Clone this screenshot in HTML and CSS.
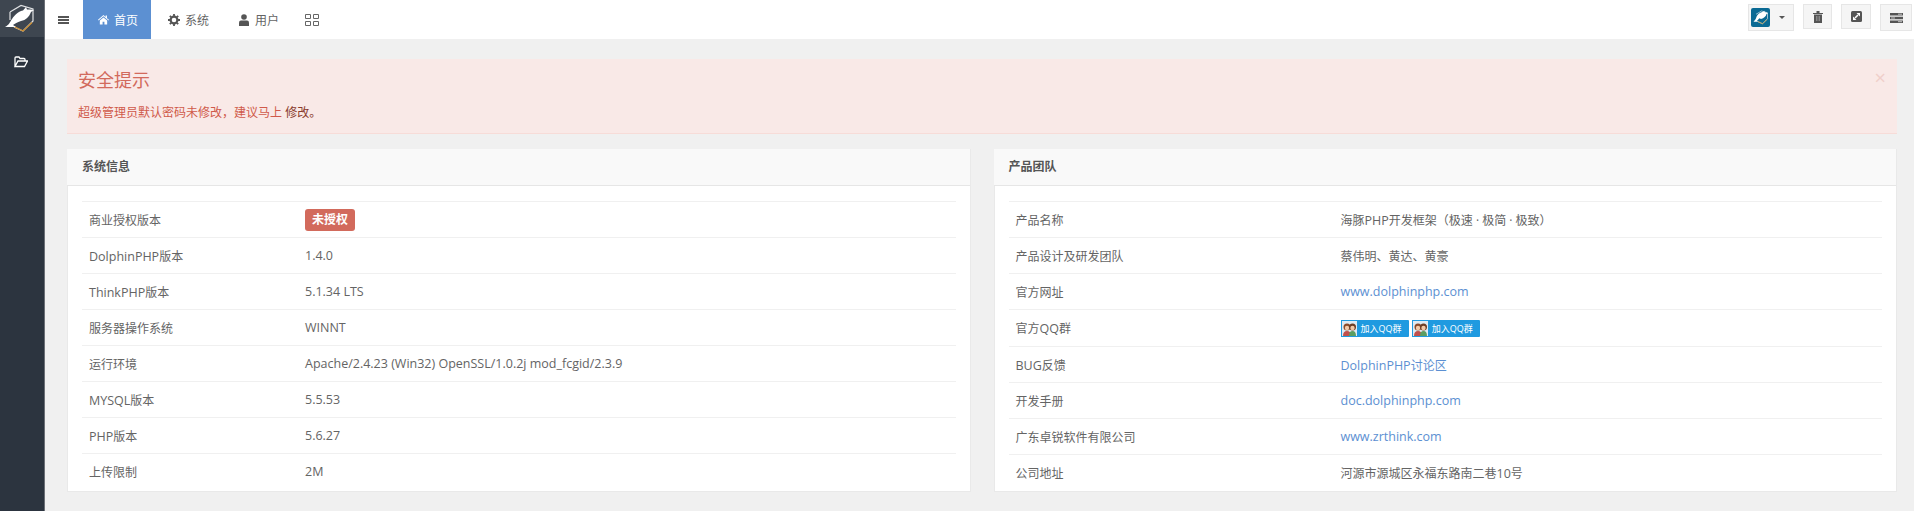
FILE: index.html
```html
<!DOCTYPE html>
<html lang="zh-CN">
<head>
<meta charset="utf-8">
<title>后台首页</title>
<link rel="stylesheet" href="styles.css">
</head>
<body>
<div class="page">
  <aside class="sidebar">
    <div class="brand">
      <svg width="44" height="37" viewBox="0 0 44 37"><path d="M10 12 21 5.500 33 9v12L23 31l-9-4M10 12v8" fill="none" stroke="#dfe1e3" stroke-width="1.200"/><path d="M14 26.500 23 31l9-8.500" fill="none" stroke="#c98a2c" stroke-width="1.200"/><path d="M5 27C9 25 10 22 12 19 15 14 20 11 23 10.500L26 7l1 2.500C29 9.500 31.500 9.500 34 10l-3 2C29 17 26 20 21 21 17 22 15 24 13 25l3 2z" fill="#fff"/></svg>
    </div>
    <div class="side-item">
      <svg width="14" height="12" viewBox="0 0 14 12"><path d="M1 10.500V2q0-1 1-1h3l1 1.500h4q1 0 1 1V5M1 10.500h9.500L13.500 5H4z" fill="none" stroke="#fff" stroke-width="1.300"/></svg>
    </div>
  </aside>
  <div class="main">
    <header class="topbar">
      <div class="top-left">
        <span class="burger"><i></i><i></i><i></i></span>
        <a class="tab active"><svg width="11" height="11" viewBox="0 0 12 11"><path d="M6 .5 0 5.800l.6.700L6 2l5.400 4.500.6-.7L9.800 4V1H8.300v1.700zM2 6.600V11h3V8h2v3h3V6.600L6 3.200z" fill="#fff"/></svg>首页</a>
        <a class="tab"><svg width="12" height="12" viewBox="0 0 12 12"><circle cx="6" cy="6" r="3.400" fill="none" stroke="#555" stroke-width="2.200"/><path d="M6 0v2M6 10v2M0 6h2M10 6h2M1.800 1.800l1.400 1.400M8.800 8.800l1.400 1.400M10.200 1.800 8.800 3.200M3.200 8.800l-1.400 1.400" stroke="#555" stroke-width="1.800"/></svg>系统</a>
        <a class="tab"><svg width="11" height="12" viewBox="0 0 11 12"><circle cx="5" cy="3" r="2.800" fill="#555"/><path d="M0 12V8.500Q0 6.500 2 6.500h6q2 0 2 2V12z" fill="#555"/></svg>用户</a>
        <a class="tab tab-grid"><svg width="14" height="12" viewBox="0 0 14 12"><path d="M.5.500h5v4h-5zM8.500.500h5v4h-5zM.5 7.500h5v4h-5zM8.500 7.500h5v4h-5z" fill="none" stroke="#666"/></svg></a>
      </div>
      <div class="top-right">
        <button class="tool tool-user"><span class="avatar"><svg width="19" height="19" viewBox="0 0 38 37"><path d="M10 12 21 5.500 33 9v12L23 31l-9-4" fill="none" stroke="#d5e3ea" stroke-width="1.400"/><path d="M14 26.500 23 31l9-8.500" fill="none" stroke="#c9a04c" stroke-width="1.600"/><path d="M5 27C8 24 10 21 11 17 13 12 18 8 24 7l3-2v2.500C30 8 32 9 34 10l-3 1.500C30 16 26 20 20 21.500L17 20c-2 2-5 5-5 5l3 2z" fill="#fff"/></svg></span><span class="caret"></span></button>
        <button class="tool tool-sm"><svg width="10" height="12" viewBox="0 0 10 12"><path d="M0 2h10v1H0zM3.500 0h3v2h-3zM1 3.500h8V12H1z" fill="#555"/><path d="M3.500 5v5M5 5v5M6.500 5v5" stroke="#aaa" stroke-width=".6"/></svg></button>
        <button class="tool tool-md"><svg width="11" height="11" viewBox="0 0 11 11"><rect width="11" height="11" rx="1.500" fill="#555"/><path d="M5.500 2H9v3.500zM2 5.500V9h3.500z" fill="#fff"/><path d="M7 4 4 7" stroke="#fff" stroke-width="1.600"/></svg></button>
        <button class="tool tool-lg"><svg width="13" height="10" viewBox="0 0 13 10"><path d="M0 0h13v2.500H0zM0 3.700h13v2.500H0zM0 7.500h13V10H0z" fill="#555"/><path d="M8 1.200h4M1 5h4M8 8.700h4" stroke="#ddd" stroke-width=".8"/></svg></button>
      </div>
    </header>
    <main class="content">
      <section class="alert">
        <h3>安全提示</h3>
        <p>超级管理员默认密码未修改，建议马上 <a>修改。</a></p>
        <span class="close">×</span>
      </section>
      <div class="panels">
        <section class="panel">
          <h4 class="panel-head">系统信息</h4>
          <div class="panel-body">
            <table class="tbl tbl-sys">
              <tr><td>商业授权版本</td><td><span class="badge">未授权</span></td></tr>
              <tr><td><span class="en">DolphinPHP</span>版本</td><td class="en">1.4.0</td></tr>
              <tr><td><span class="en">ThinkPHP</span>版本</td><td class="en">5.1.34 LTS</td></tr>
              <tr><td>服务器操作系统</td><td class="en">WINNT</td></tr>
              <tr><td>运行环境</td><td class="en">Apache/2.4.23 (Win32) OpenSSL/1.0.2j mod_fcgid/2.3.9</td></tr>
              <tr><td><span class="en">MYSQL</span>版本</td><td class="en">5.5.53</td></tr>
              <tr><td><span class="en">PHP</span>版本</td><td class="en">5.6.27</td></tr>
              <tr><td>上传限制</td><td class="en">2M</td></tr>
            </table>
          </div>
        </section>
        <section class="panel">
          <h4 class="panel-head">产品团队</h4>
          <div class="panel-body">
            <table class="tbl tbl-team">
              <tr><td>产品名称</td><td>海豚<span class="en">PHP</span>开发框架（极速 · 极简 · 极致）</td></tr>
              <tr><td>产品设计及研发团队</td><td>蔡伟明、黄达、黄豪</td></tr>
              <tr><td>官方网址</td><td><a class="en">www.dolphinphp.com</a></td></tr>
              <tr class="row-qq"><td>官方<span class="en">QQ</span>群</td><td>
                <span class="qq"><span class="qq-ico"><svg width="15" height="14" viewBox="0 0 15 14"><circle cx="5" cy="5" r="3.500" fill="#8a4b2a"/><circle cx="10.500" cy="5" r="3.500" fill="#6e3d24"/><circle cx="5" cy="6" r="2.200" fill="#f2c9a8"/><circle cx="10.500" cy="6" r="2.200" fill="#f2c9a8"/><path d="M1 14q0-5 4-5t4 5z" fill="#c0504d"/><path d="M7 14q0-5 3.500-5T14 14z" fill="#5c9e62"/></svg></span>加入QQ群</span>
                <span class="qq"><span class="qq-ico"><svg width="15" height="14" viewBox="0 0 15 14"><circle cx="5" cy="5" r="3.500" fill="#8a4b2a"/><circle cx="10.500" cy="5" r="3.500" fill="#6e3d24"/><circle cx="5" cy="6" r="2.200" fill="#f2c9a8"/><circle cx="10.500" cy="6" r="2.200" fill="#f2c9a8"/><path d="M1 14q0-5 4-5t4 5z" fill="#c0504d"/><path d="M7 14q0-5 3.500-5T14 14z" fill="#5c9e62"/></svg></span>加入QQ群</span>
              </td></tr>
              <tr><td><span class="en">BUG</span>反馈</td><td><a><span class="en">DolphinPHP</span>讨论区</a></td></tr>
              <tr><td>开发手册</td><td><a class="en">doc.dolphinphp.com</a></td></tr>
              <tr><td>广东卓锐软件有限公司</td><td><a class="en">www.zrthink.com</a></td></tr>
              <tr><td>公司地址</td><td>河源市源城区永福东路南二巷<span class="en">10</span>号</td></tr>
            </table>
          </div>
        </section>
      </div>
    </main>
  </div>
</div>
</body>
</html>
```

FILE: styles.css
```css
* { box-sizing: border-box; }
html, body { margin: 0; height: 100%; overflow: hidden; }
body {
  font-family: "Open Sans", "Noto Sans CJK SC", sans-serif;
  font-size: 12px;
  color: #646464;
  background: #f0f0f0;
}
.en { font-size: 12.5px; }
.page { display: flex; height: 511px; }
.sidebar { width: 45px; flex: none; background: #2c343f; border-right: 1px solid #6c7077; }
.brand { height: 37px; background: #3e4650; }
.brand svg { display: block; }
.side-item { height: 53px; padding-top: 19px; display: flex; justify-content: center; align-items: flex-start; padding-right: 3px; }
.main { flex: 1; min-width: 0; }
.topbar { height: 39px; background: #fff; display: flex; justify-content: space-between; }
.top-left { display: flex; }
.burger { width: 38px; display: flex; flex-direction: column; gap: 1px; justify-content: center; padding-left: 13px; }
.burger i { width: 11px; height: 2px; background: #555; display: block; }
.tab { display: flex; align-items: center; gap: 5px; padding: 0 13px 0 17px; height: 39px; font-size: 12px; color: #646464; white-space: nowrap; }
.tab.active { background: #5c90d2; color: #fff; padding-left: 15px; }
.tab-grid { padding-left: 13px; }
.top-right { display: flex; align-items: flex-start; }
.tool { background: #f5f5f5; border: 1px solid #e6e6e6; padding: 0; display: flex; align-items: center; justify-content: center; margin-top: 4px; font: inherit; }
.tool-user { width: 46px; height: 27px; justify-content: flex-start; padding-left: 2px; margin-right: 9px; }
.avatar { width: 19px; height: 19px; background: #0a6a94; border-radius: 2px; display: block; }
.avatar svg { display: block; }
.caret { width: 0; height: 0; border: 3px solid transparent; border-top-color: #555; border-bottom: 0; margin-left: 9px; }
.tool-sm { width: 29px; height: 25px; margin-right: 9px; }
.tool-md { width: 30px; height: 25px; margin-right: 9px; }
.tool-lg { width: 32px; height: 27px; margin-right: 2px; }
.content { padding: 20px 17px 0 22px; }
.alert { position: relative; height: 75px; background: #f9e9e7; border-bottom: 1px solid #f7dcd8; color: #d0594a; padding: 7px 11px 0; }
.alert h3 { margin: 0; font-size: 18px; font-weight: 400; line-height: 28px; color: #d26a5c; }
.alert p { margin: 10px 0 0; font-size: 12px; line-height: 17px; }
.alert a { color: #8a3a2c; font-weight: 400; }
.close { position: absolute; top: 9px; right: 11px; color: #f0cfca; font-size: 20px; line-height: 20px; }
.panels { display: flex; gap: 23px; margin-top: 15px; }
.panel { flex: 1; min-width: 0; background: #fff; min-height: 340px; border: 1px solid #e9e9e9; border-top: 0; }
.panel-head { margin: 0 0 0 -1px; height: 37px; background: #f9f9f9; border-bottom: 1px solid #e6e6e6; padding: 0 15px; font-size: 12px; font-weight: 600; line-height: 36px; color: #555; }
.panel-body { padding: 15px 14px 0; }
.tbl { width: 100%; border-collapse: collapse; table-layout: fixed; }
.tbl td { height: 36px; padding: 0 7px; border-top: 1px solid #f0f0f0; vertical-align: middle; }
.tbl .row-qq td { height: 37px; }
.tbl-sys td:first-child { width: 216px; }
.tbl-team td:first-child { width: 325px; }
.tbl a { color: #5c90d2; }
.badge { display: inline-block; background: #d26a5c; color: #fff; font-weight: 700; font-size: 12px; line-height: 22px; padding: 0 7px; border-radius: 3px; vertical-align: middle; }
.qq { display: inline-flex; align-items: center; gap: 3px; width: 68px; height: 17px; background: #1f9ae0; border-radius: 1px; color: #fff; font-size: 9px; vertical-align: middle; }
.qq-ico { width: 17px; height: 17px; background: #dfeaf2; border: 1px solid #1f9ae0; display: flex; align-items: center; justify-content: center; overflow: hidden; }
```
